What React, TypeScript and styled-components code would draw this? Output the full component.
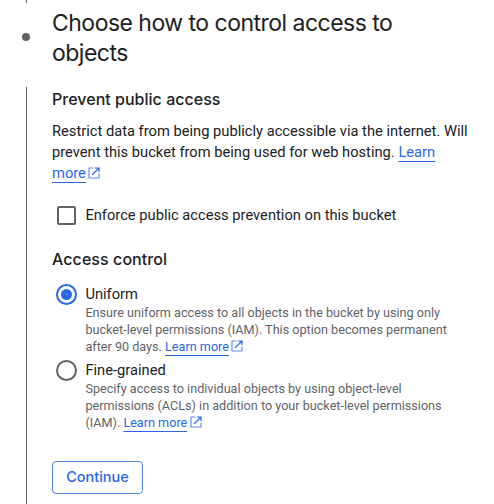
import React from "react";
import styled, { createGlobalStyle } from "styled-components";

const GlobalStyle = createGlobalStyle`
  * { box-sizing: border-box; }
  body { margin: 0; background: #fff; overflow: hidden; }
`;

const Page = styled.main`
  display: flex;
  width: 494px;
  height: 504px;
  color: #202124;
  font-family: Roboto, "Liberation Sans", sans-serif;
  white-space: nowrap;
`;

const Rail = styled.div`
  width: 52px;
  padding-left: 21px;
  display: flex;
  flex-direction: column;
  flex-shrink: 0;
`;

const RailLine = styled.div<{ $grow?: boolean }>`
  width: 1px;
  margin-left: 5px;
  background: #5f6368;
  ${(p) => (p.$grow ? "flex: 1;" : "height: 3px;")}
`;

const StepDot = styled.div`
  width: 8px;
  height: 8px;
  margin: 30px 0 46px 0.5px;
  border-radius: 50%;
  background: #5f6368;
`;

const Content = styled.div`
  flex: 1;
  padding-top: 8px;
`;

const Title = styled.h1`
  margin: 0;
  font: 400 23px/30px Inter, sans-serif;
  letter-spacing: -0.52px;
`;

const SectionTitle = styled.h2<{ $top: number; $spacing: number }>`
  margin: ${(p) => p.$top}px 0 0;
  font: 500 16px/24px Inter, sans-serif;
  letter-spacing: ${(p) => p.$spacing}px;
`;

const Paragraph = styled.p`
  margin: 10px 0 0;
  font-size: 14.7px;
  line-height: 21px;
`;

const Link = styled.a`
  color: #2a67e2;
  text-decoration: underline;
  text-decoration-thickness: 1px;
  text-underline-offset: 4px;
  text-decoration-skip-ink: none;
`;

const ExternalSvg = styled.svg`
  width: 12px;
  height: 12px;
  margin-left: 2.5px;
  vertical-align: -1px;
`;

const Option = styled.label<{ $top?: number }>`
  display: flex;
  margin: ${(p) => p.$top ?? 0}px 0 0 4px;
`;

const ControlSlot = styled.span`
  display: flex;
  width: 29.4px;
  height: 21px;
  align-items: center;
`;

const Checkbox = styled.span`
  width: 19px;
  height: 19px;
  margin-left: 1px;
  border: 2px solid #5f6368;
  border-radius: 2px;
`;

const Radio = styled.span<{ $checked?: boolean }>`
  display: grid;
  place-items: center;
  width: 21px;
  height: 21px;
  border: 2px solid ${(p) => (p.$checked ? "#2a67e2" : "#5f6368")};
  border-radius: 50%;
  &::after {
    content: "";
    width: 11px;
    height: 11px;
    border-radius: 50%;
    background: ${(p) => (p.$checked ? "radial-gradient(circle, #a9c2f3 0 0.6px, #2a67e2 0.9px)" : "transparent")};
  }
`;

const OptionLabel = styled.span`
  display: block;
  font-size: 14.7px;
  line-height: 21px;
`;

const Hint = styled.span`
  display: block;
  margin-top: -1px;
  color: #5f6368;
  font-size: 12.64px;
  line-height: 17px;
`;

const ContinueButton = styled.button`
  display: block;
  width: 91px;
  height: 33px;
  margin-top: 30px;
  padding: 0 0 2px;
  border: 1px solid #5482df;
  border-radius: 4px;
  background: #fff;
  color: #2a67e2;
  font: 500 14.5px/29px Inter, sans-serif;
`;

const ExternalIcon = () => (
  <ExternalSvg viewBox="0 0 12 12" fill="none" stroke="#2a67e2" aria-hidden="true">
    <path d="M5.5 1H1v10h10V6.5" strokeWidth="1.2" opacity="0.75" />
    <path d="M7 1h4v4M11 1 4 8" strokeWidth="1.2" />
  </ExternalSvg>
);

export default function App() {
  return (
    <>
      <GlobalStyle />
      <Page>
        <Rail>
          <RailLine />
          <StepDot />
          <RailLine $grow />
        </Rail>
        <Content>
          <Title>
            Choose how to control access to
            <br />
            objects
          </Title>
          <SectionTitle $top={19} $spacing={0.02}>Prevent public access</SectionTitle>
          <Paragraph>
            Restrict data from being publicly accessible via the internet. Will
            <br />
            prevent this bucket from being used for web hosting. <Link>Learn</Link>
            <br />
            <Link>more</Link>
            <ExternalIcon />
          </Paragraph>
          <Option $top={21}>
            <ControlSlot>
              <Checkbox />
            </ControlSlot>
            <OptionLabel>Enforce public access prevention on this bucket</OptionLabel>
          </Option>
          <SectionTitle $top={21} $spacing={0.07}>Access control</SectionTitle>
          <Option $top={13}>
            <ControlSlot>
              <Radio $checked />
            </ControlSlot>
            <span>
              <OptionLabel>Uniform</OptionLabel>
              <Hint>
                Ensure uniform access to all objects in the bucket by using only
                <br />
                bucket-level permissions (IAM). This option becomes permanent
                <br />
                after 90 days. <Link>Learn more</Link>
                <ExternalIcon />
              </Hint>
            </span>
          </Option>
          <Option $top={5}>
            <ControlSlot>
              <Radio />
            </ControlSlot>
            <span>
              <OptionLabel>Fine-grained</OptionLabel>
              <Hint>
                Specify access to individual objects by using object-level
                <br />
                permissions (ACLs) in addition to your bucket-level permissions
                <br />
                (IAM). <Link>Learn more</Link>
                <ExternalIcon />
              </Hint>
            </span>
          </Option>
          <ContinueButton>Continue</ContinueButton>
        </Content>
      </Page>
    </>
  );
}
